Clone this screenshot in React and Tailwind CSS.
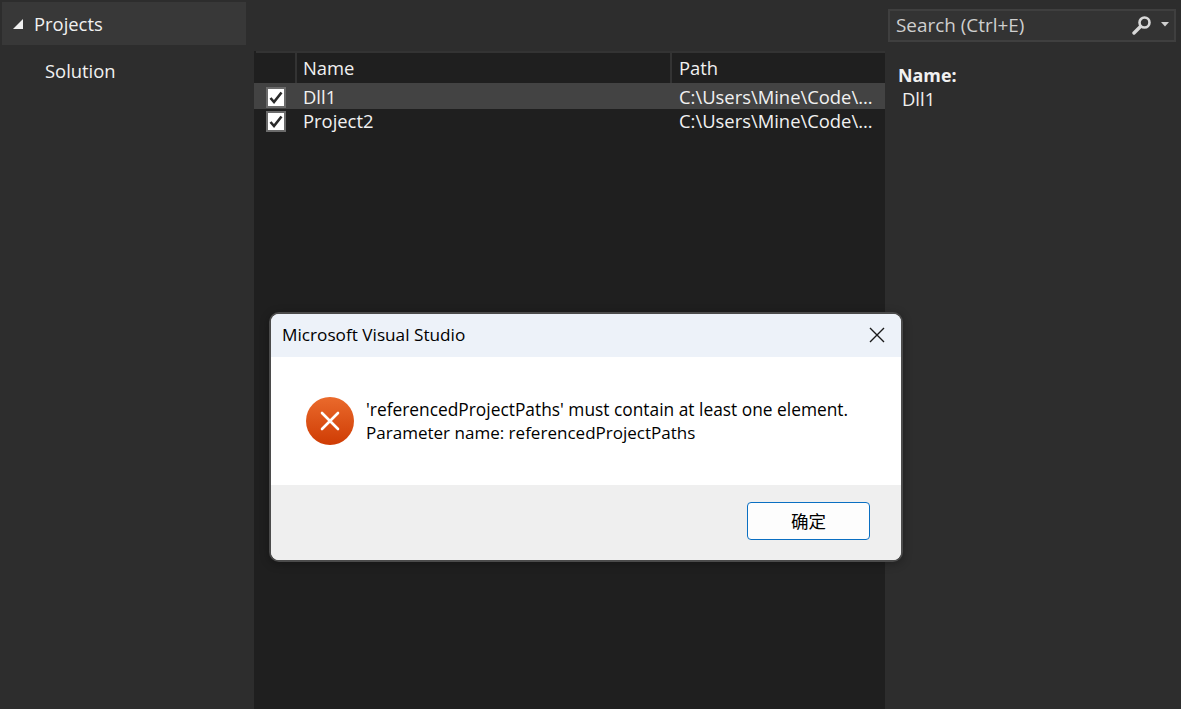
import React from "react";

function Check() {
  return (
    <span className="flex items-center justify-center w-[20px] h-[21px] mt-[2px] bg-white border-[2px] border-[#6b6b6b] shrink-0">
      <svg width="14" height="13" viewBox="0 0 14 13" fill="none">
        <path d="M1.5 7 L5 11 L12.5 1.5" stroke="#2a2a2a" strokeWidth="2.6" />
      </svg>
    </span>
  );
}

function Row({ name, selected }) {
  return (
    <div className={`flex items-start ${selected ? "h-[26px] pt-[2px] bg-[#434343]" : "h-[24px]"}`}>
      <div className="w-[42px] pl-[12px] flex"><Check /></div>
      <div className="w-[376px] pl-[7px] text-[#f1f1f1]">{name}</div>
      <div className="flex-1 pl-[7px] text-[#f1f1f1] whitespace-nowrap overflow-hidden">C:\Users\Mine\Code\...</div>
    </div>
  );
}

export default function App() {
  return (
    <div className="relative w-[1181px] h-[709px] overflow-hidden bg-[#2d2d2d] flex text-[18.4px] leading-[24px] font-['Open_Sans','Noto_Sans',sans-serif] text-[#f1f1f1]">
      <aside className="w-[254px] shrink-0 pt-[2px]">
        <div className="ml-[2px] w-[244px] h-[43px] bg-[#383838] flex items-center pl-[10px]">
          <svg width="12" height="12" viewBox="0 0 12 12" className="mr-[10px]">
            <path d="M1 11 L11 11 L11 1 Z" fill="#f1f1f1" />
          </svg>
          <span>Projects</span>
        </div>
        <div className="pl-[45px] pt-[14px]">Solution</div>
      </aside>

      <main className="w-[631px] shrink-0 pt-[51px]">
        <div className="h-full bg-[#1f1f1f]">
          <div className="flex h-[32px] border-t-[2px] border-[#333333] ml-[2px]">
            <div className="w-[41px] border-r-[2px] border-[#333333]" />
            <div className="w-[375px] border-r-[2px] border-[#333333] pl-[6px] leading-[30px]">Name</div>
            <div className="flex-1 pl-[7px] leading-[30px]">Path</div>
          </div>
          <Row name="Dll1" selected />
          <Row name="Project2" />
        </div>
      </main>

      <section className="flex-1 pl-[3px] pt-[9px]">
        <div className="w-[288px] h-[33px] bg-[#333333] border-[2px] border-[#3f3f3f] flex items-center pl-[6px] pr-[4px] pb-[2px] text-[#cfcfcf] text-[18.9px]">
          <span className="flex-1">Search (Ctrl+E)</span>
          <svg width="22" height="20" viewBox="0 0 22 20" fill="none">
            <circle cx="13.5" cy="7.5" r="5" stroke="#d8d8d8" strokeWidth="2.6" />
            <path d="M9.5 11.5 L3 18" stroke="#d8d8d8" strokeWidth="3.4" strokeLinecap="round" />
          </svg>
          <svg width="10" height="5" viewBox="0 0 10 5" className="ml-[7px]">
            <path d="M1 0 L9 0 L5 4.5 Z" fill="#d0d0d0" />
          </svg>
        </div>
        <div className="pl-[10px] pt-[21px] font-bold text-[17.9px] leading-[24px]">Name:</div>
        <div className="pl-[14px] leading-[24px]">Dll1</div>
      </section>

      <div className="absolute left-[269px] top-[312px] w-[634px] h-[250px] rounded-[10px] border-[2px] border-[#4b4b4b] overflow-hidden flex flex-col bg-white text-black shadow-[0_2px_10px_rgba(0,0,0,0.3)]">
        <div className="h-[43px] bg-[#edf2f9] flex items-center justify-between pl-[11px] pr-[16px] pb-[1px] text-[17.2px]">
          <span>Microsoft Visual Studio</span>
          <svg width="16" height="16" viewBox="0 0 16 16" fill="none">
            <path d="M1 1 L15 15 M15 1 L1 15" stroke="#1a1a1a" strokeWidth="1.4" />
          </svg>
        </div>
        <div className="h-[128px] flex items-center pl-[35px]">
          <svg width="48" height="48" viewBox="0 0 48 48" className="shrink-0">
            <defs>
              <linearGradient id="err" x1="0" y1="0" x2="0" y2="1">
                <stop offset="0" stopColor="#ea6a2c" />
                <stop offset="1" stopColor="#cf3c04" />
              </linearGradient>
            </defs>
            <circle cx="24" cy="24" r="24" fill="url(#err)" />
            <path d="M16 16 L32 32 M32 16 L16 32" stroke="#fff" strokeWidth="2.6" strokeLinecap="round" />
          </svg>
          <div className="pl-[12px] leading-[24px]">
            <div className="text-[17.35px]">'referencedProjectPaths' must contain at least one element.</div>
            <div className="text-[17.05px]">Parameter name: referencedProjectPaths</div>
          </div>
        </div>
        <div className="flex-1 bg-[#efefef] flex items-start justify-end pr-[31px] pt-[17px]">
          <button className="w-[123px] h-[38px] rounded-[4px] border border-[#0a6fc2] bg-[#fdfdfd] text-[17.5px] font-['Noto_Sans_CJK_SC',sans-serif] text-black">确定</button>
        </div>
      </div>
    </div>
  );
}
